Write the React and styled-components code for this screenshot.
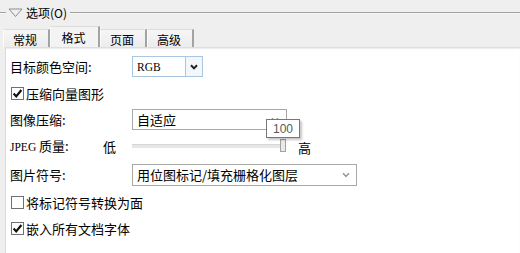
import React from "react";
import styled, { createGlobalStyle } from "styled-components";

const GlobalStyle = createGlobalStyle`
  html, body {
    margin: 0;
    padding: 0;
    background: #efefef;
  }
  body {
    width: 520px;
    height: 253px;
    overflow: hidden;
    font-family: "Noto Sans CJK SC", "Noto Sans", sans-serif;
    color: #000;
  }
`;

const Page = styled.div`
  height: 253px;
  display: flex;
  flex-direction: column;
`;

const Legend = styled.div`
  height: 25px;
  display: flex;
  align-items: center;
  font-size: 12px;
`;

const Rule = styled.div`
  height: 0;
  border-top: 1px solid #a0a0a0;
  border-bottom: 1px solid #f7f7f7;
  width: ${(p) => (p.$grow ? "auto" : "6px")};
  flex: ${(p) => (p.$grow ? 1 : "none")};
  margin-top: 1px;
`;

const LegendText = styled.span`
  margin: 0 3px 0 2px;
  line-height: 14px;
`;

const TabBar = styled.div`
  display: flex;
  align-items: flex-end;
  padding-left: 3px;
  height: 22px;
`;

const Tab = styled.div`
  width: ${(p) => p.$w}px;
  height: ${(p) => (p.$active ? 21 : 18)}px;
  box-sizing: border-box;
  border-top: 1px solid #dcdcdc;
  border-left: 1px solid #fbfbfb;
  border-right: 2px solid #a3a3a3;
  background: ${(p) =>
    p.$active ? "#f3f3f3" : "linear-gradient(#f6f6f6, #ececec)"};
  font-size: 12px;
  display: flex;
  align-items: center;
  justify-content: center;
  padding-top: ${(p) => (p.$active ? 0 : 2)}px;
  padding-right: 2px;
`;

const Panel = styled.div`
  flex: 1;
  margin-left: 5px;
  background: #fff;
  border-left: 1px solid #dcdcdc;
  border-top: 1px solid #dedede;
  box-shadow: inset 0 1px 1px #ececec;
  padding: 8px 0 0 4px;
  display: flex;
  flex-direction: column;
  gap: 6px;
  font-size: 13px;
`;

const Row = styled.div`
  display: flex;
  align-items: center;
  height: ${(p) => p.$h || 21}px;
  margin-top: ${(p) => p.$mt || 0}px;
`;

const Label = styled.div`
  width: ${(p) => p.$w || 122}px;
  flex: none;
  line-height: 16px;
`;

const Latin = styled.span`
  font-family: "Liberation Serif", serif;
  font-size: 11.5px;
`;

const Select = styled.div`
  position: relative;
  width: ${(p) => p.$w}px;
  height: ${(p) => p.$h || 21}px;
  box-sizing: border-box;
  border: 1px solid ${(p) => (p.$focus ? "#a9c7e2" : "#a8a8a8")};
  background: #fff;
  display: flex;
  align-items: center;
`;

const SelectValue = styled.div`
  flex: 1;
  padding-left: 4px;
  line-height: 16px;
  white-space: nowrap;
`;

const DropButton = styled.div`
  width: 16px;
  align-self: stretch;
  border-left: 1px solid #a9c7e2;
  background: #f3f7fc;
  display: flex;
  align-items: center;
  justify-content: center;
`;

const ChevronSlot = styled.div`
  width: 16px;
  margin-right: ${(p) => p.$mr || 2}px;
  display: flex;
  align-items: center;
  justify-content: center;
`;

const Check = styled.div`
  display: flex;
  align-items: center;
  margin-left: 1px;
  gap: 2px;
`;

const Box = styled.div`
  width: 13px;
  height: 13px;
  box-sizing: border-box;
  border: 1px solid #707070;
  background: #fff;
  display: flex;
  align-items: center;
  justify-content: center;
`;

const Low = styled.div`
  width: 29px;
  flex: none;
`;

const Slider = styled.div`
  position: relative;
  width: 154px;
  height: 20px;
  display: flex;
  align-items: center;
`;

const Track = styled.div`
  width: 100%;
  height: 3px;
  background: #e6e6e6;
  border-top: 1px solid #d6d6d6;
`;

const Thumb = styled.div`
  position: absolute;
  right: 0;
  top: 3px;
  width: 6px;
  height: 13px;
  box-sizing: border-box;
  border: 1px solid #a2a2a2;
  background: #e9e9e9;
`;

const Tip = styled.div`
  position: absolute;
  right: -14px;
  top: -17px;
  width: 34px;
  height: 19px;
  box-sizing: border-box;
  border: 1px solid #777;
  background: #fff;
  box-shadow: 2px 2px 2px rgba(0, 0, 0, 0.22);
  color: #5a5a5a;
  font-family: "Liberation Sans", sans-serif;
  font-size: 12px;
  display: flex;
  align-items: center;
  justify-content: center;
`;

const High = styled.div`
  margin-left: 12px;
  margin-top: 2px;
`;

const Chevron = ({ color = "#222", w = 2 }) => (
  <svg width="8" height="6" viewBox="0 0 8 6">
    <path d="M1 1.2 L4 4.4 L7 1.2" fill="none" stroke={color} strokeWidth={w} />
  </svg>
);

const Tick = () => (
  <svg width="11" height="11" viewBox="0 0 11 11">
    <path d="M1.6 5.6 L4.2 8.4 L9.4 2" fill="none" stroke="#111" strokeWidth="2.2" />
  </svg>
);

const Checkbox = ({ checked, children }) => (
  <Check>
    <Box>{checked && <Tick />}</Box>
    <span>{children}</span>
  </Check>
);

const tabs = [
  { t: "常规", w: 47 },
  { t: "格式", w: 50, active: true },
  { t: "页面", w: 47 },
  { t: "高级", w: 47 },
];

export default function App() {
  return (
    <Page>
      <GlobalStyle />
      <Legend>
        <Rule />
        <svg width="16" height="10" viewBox="0 0 16 10" style={{ marginLeft: 2 }}>
          <path d="M1 1 L14 1 L7.5 8.5 Z" fill="none" stroke="#8c8c8c" strokeWidth="1" />
        </svg>
        <LegendText>选项(O)</LegendText>
        <Rule $grow />
      </Legend>
      <TabBar>
        {tabs.map((tab) => (
          <Tab key={tab.t} $w={tab.w} $active={tab.active}>
            {tab.t}
          </Tab>
        ))}
      </TabBar>
      <Panel>
        <Row>
          <Label>目标颜色空间:</Label>
          <Select $w={71} $focus>
            <SelectValue>
              <Latin>RGB</Latin>
            </SelectValue>
            <DropButton>
              <Chevron />
            </DropButton>
          </Select>
        </Row>
        <Row $h={20}>
          <Checkbox checked>压缩向量图形</Checkbox>
        </Row>
        <Row>
          <Label>图像压缩:</Label>
          <Select $w={155}>
            <SelectValue>自适应</SelectValue>
            <ChevronSlot $mr={3}>
              <Chevron color="#9a9a9a" w={1.6} />
            </ChevronSlot>
          </Select>
        </Row>
        <Row $h={20}>
          <Label $w={93}>
            <Latin>JPEG</Latin> 质量:
          </Label>
          <Low>低</Low>
          <Slider>
            <Track />
            <Thumb />
            <Tip>100</Tip>
          </Slider>
          <High>高</High>
        </Row>
        <Row $h={22} $mt={2}>
          <Label>图片符号:</Label>
          <Select $w={225} $h={22}>
            <SelectValue>用位图标记/填充栅格化图层</SelectValue>
            <ChevronSlot>
              <Chevron color="#9a9a9a" w={1.6} />
            </ChevronSlot>
          </Select>
        </Row>
        <Row $h={20}>
          <Checkbox>将标记符号转换为面</Checkbox>
        </Row>
        <Row $h={20}>
          <Checkbox checked>嵌入所有文档字体</Checkbox>
        </Row>
      </Panel>
    </Page>
  );
}
